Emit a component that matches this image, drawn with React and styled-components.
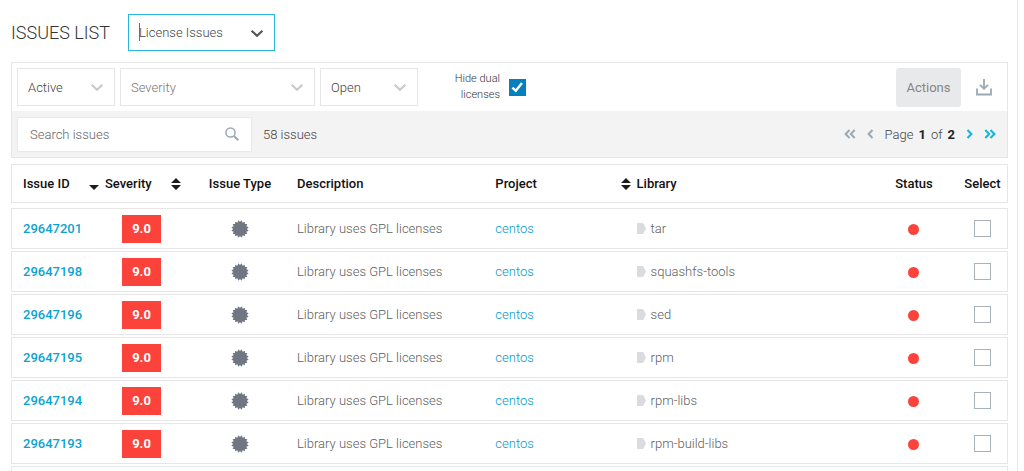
import React, { useState } from "react";
import styled, { createGlobalStyle } from "styled-components";

const line = "#e6e6e6";
const cyan = "#15acd6";

const GlobalStyle = createGlobalStyle`
  * { box-sizing: border-box; }
  body { margin: 0; background: #fff; }
  body, button, input, select {
    font-family: Roboto, "Liberation Sans", sans-serif;
    font-size: 13px;
    font-weight: 300;
    color: #444;
  }
`;

const Page = styled.main`
  height: 100vh;
  overflow: hidden;
  margin-right: 6px;
  padding: 14px 9px 0 11px;
  border-right: 1px solid ${line};
`;

const TitleBar = styled.header`
  display: flex;
  align-items: center;
  gap: 18px;
  margin-bottom: 11px;
`;

const Title = styled.h1`
  margin: 0;
  font-size: 18px;
  font-weight: 300;
  color: #333;
`;

const SelectWrap = styled.div`
  position: relative;
  width: ${(p) => p.$width}px;
  svg {
    position: absolute;
    top: 50%;
    right: 11px;
    margin-top: -4px;
    pointer-events: none;
  }
`;

const Select = styled.select`
  appearance: none;
  display: block;
  width: 100%;
  height: ${(p) => (p.$active ? 37 : 38)}px;
  padding: 0 10px;
  border: 1px solid ${(p) => (p.$active ? "#2bb8dc" : line)};
  border-radius: 0;
  background: #fff;
  color: ${(p) => (p.$muted ? "#777" : "#444")};
  outline: none;
`;

const TextCursor = styled.span`
  position: absolute;
  left: 11px;
  top: 9px;
  width: 1px;
  height: 18px;
  background: #8a6a48;
`;

const Panel = styled.section`
  border: 1px solid ${line};
  margin-bottom: 6px;
`;

const Toolbar = styled.div`
  display: flex;
  align-items: center;
  gap: 5px;
  height: 48px;
  padding: 0 15px 0 5px;
`;

const SearchBar = styled(Toolbar)`
  height: 46px;
  padding-right: 11px;
  background: #f3f3f3;
`;

const DualLabel = styled.label`
  display: flex;
  align-items: center;
  gap: 9px;
  margin-left: 27px;
  font-size: 11px;
  line-height: 16px;
  text-align: right;
  color: #333;
`;

const LabelText = styled.span`
  width: 50px;
`;

const CheckWrap = styled.span`
  position: relative;
  display: flex;
  svg {
    position: absolute;
    inset: 0;
    pointer-events: none;
  }
`;

const Checkbox = styled.input`
  appearance: none;
  width: 17px;
  height: 17px;
  margin: 0;
  border: 1px solid ${(p) => (p.checked ? "#0580bd" : "#a9b2ba")};
  background: ${(p) => (p.checked ? "#0580bd" : "#fff")};
`;

const ActionsButton = styled.button`
  height: 39px;
  width: 65px;
  margin-left: auto;
  padding: 0;
  border: 0;
  border-radius: 3px;
  background: #e8e9ea;
  color: #858585;
  font-weight: 400;
`;

const IconButton = styled.button`
  display: flex;
  padding: 0;
  border: 0;
  background: none;
  color: ${(p) => p.$color || "#9aa9b3"};
`;

const DownloadButton = styled(IconButton)`
  margin-left: 10px;
`;

const SearchField = styled.div`
  display: flex;
  align-items: center;
  width: 235px;
  height: 35px;
  padding: 0 12px;
  border: 1px solid #e9e9e9;
  background: #fff;
`;

const SearchInput = styled.input`
  flex: 1;
  min-width: 0;
  padding: 0;
  border: 0;
  outline: none;
  &::placeholder { color: #666; }
`;

const Count = styled.span`
  margin-left: 6px;
`;

const Pager = styled.nav`
  display: flex;
  align-items: center;
  gap: 11px;
  margin-left: auto;
`;

const PageText = styled.span`
  display: flex;
  gap: 5px;
  b { font-weight: 700; color: #222; }
`;

const Table = styled.table`
  display: block;
  thead { display: block; margin-bottom: 5px; }
  tbody { display: flex; flex-direction: column; gap: 2px; }
`;

const Row = styled.tr`
  display: grid;
  grid-template-columns:
    93px 78px 114px minmax(0, 198fr) minmax(0, 141fr)
    minmax(0, 233fr) 88px 49px;
  align-items: center;
  height: ${(p) => (p.$head ? 39 : 41)}px;
  border: 1px solid ${line};
`;

const HeadCell = styled.th`
  display: flex;
  align-items: center;
  justify-content: ${(p) => p.$justify || "flex-start"};
  padding: ${(p) => p.$pad || "0"};
  font-weight: 500;
  color: #111;
  white-space: nowrap;
`;

const Cell = styled.td`
  display: flex;
  align-items: center;
  justify-content: ${(p) => (p.$center ? "center" : "flex-start")};
  gap: 5px;
  padding: ${(p) => p.$pad || "0"};
  color: #606060;
  white-space: nowrap;
`;

const IssueLink = styled.a`
  font-weight: 500;
  color: #0aa3cf;
  text-decoration: none;
`;

const ProjectLink = styled.a`
  font-weight: 300;
  color: #0099c8;
  text-decoration: none;
`;

const Score = styled.span`
  display: flex;
  align-items: center;
  justify-content: center;
  width: 39px;
  height: 28px;
  background: #fb433b;
  color: #fff;
  font-weight: 700;
`;

const StatusDot = styled.span`
  width: 11px;
  height: 11px;
  border-radius: 50%;
  background: #fb433b;
`;

const Chevron = ({ color }) => (
  <svg width="14" height="9" viewBox="0 0 14 9" fill="none" stroke={color} strokeWidth="2.2">
    <path d="M1.6 1.8 7 6.8l5.4-5" />
  </svg>
);

const Dropdown = ({ label, width, active, muted }) => (
  <SelectWrap $width={width}>
    <Select aria-label={label} $active={active} $muted={muted}>
      <option>{label}</option>
    </Select>
    {active && <TextCursor />}
    <Chevron color={active ? "#555" : "#c9c9c9"} />
  </SelectWrap>
);

const SortDown = () => (
  <svg width="10" height="13" viewBox="0 0 10 13">
    <path d="M0 8h10L5 13z" fill="#1c1c1c" />
  </svg>
);

const SortBoth = () => (
  <svg width="10" height="12" viewBox="0 0 10 12" fill="#1c1c1c">
    <path d="M0 5 5 0l5 5zM0 7h10l-5 5z" />
  </svg>
);

const Arrows = ({ twice, flip }) => (
  <svg
    width={twice ? 12 : 7}
    height="10"
    viewBox={twice ? "0 0 12 10" : "0 0 7 10"}
    fill="none"
    stroke="currentColor"
    strokeWidth="2"
  >
    <g transform={flip ? `translate(${twice ? 12 : 7} 0) scale(-1 1)` : undefined}>
      <path d="M5.5 1 1.6 5l3.9 4" />
      {twice && <path d="M10.7 1 6.8 5l3.9 4" />}
    </g>
  </svg>
);

const burst = Array.from({ length: 32 }, (_, i) => {
  const r = i % 2 ? 6.9 : 8.8;
  const a = ((i + 1) * Math.PI) / 16;
  return `${(9 + r * Math.cos(a)).toFixed(2)},${(9 + r * Math.sin(a)).toFixed(2)}`;
}).join(" ");

const LicenseIcon = () => (
  <svg width="18" height="18" viewBox="0 0 18 18">
    <polygon points={burst} fill="#707682" />
  </svg>
);

const LibraryIcon = () => (
  <svg width="9" height="11" viewBox="0 0 9 11">
    <path d="M0 0h5.5q.6 0 .9.6L9 5.5 6.4 10.4q-.3.6-.9.6H0z" fill="#d9dbdf" />
  </svg>
);

const issues = [
  ["29647201", "tar"],
  ["29647198", "squashfs-tools"],
  ["29647196", "sed"],
  ["29647195", "rpm"],
  ["29647194", "rpm-libs"],
  ["29647193", "rpm-build-libs"],
];

const IssueRow = ({ id, library }) => {
  const [checked, setChecked] = useState(false);
  return (
    <Row>
      <Cell $pad="0 0 0 11px"><IssueLink href="#">{id}</IssueLink></Cell>
      <Cell $pad="0 0 0 17px"><Score>9.0</Score></Cell>
      <Cell $center><LicenseIcon /></Cell>
      <Cell>Library uses GPL licenses</Cell>
      <Cell><ProjectLink href="#">centos</ProjectLink></Cell>
      <Cell><LibraryIcon />{library}</Cell>
      <Cell $center $pad="2px 0 0"><StatusDot /></Cell>
      <Cell $center>
        <Checkbox
          type="checkbox"
          aria-label={`Select ${id}`}
          checked={checked}
          onChange={(e) => setChecked(e.target.checked)}
        />
      </Cell>
    </Row>
  );
};

export default function App() {
  const [hideDual, setHideDual] = useState(true);
  return (
    <Page>
      <GlobalStyle />
      <TitleBar>
        <Title>ISSUES LIST</Title>
        <Dropdown label="License Issues" width={147} active />
      </TitleBar>

      <Panel>
        <Toolbar>
          <Dropdown label="Active" width={98} />
          <Dropdown label="Severity" width={195} muted />
          <Dropdown label="Open" width={98} />
          <DualLabel>
            <LabelText>Hide dual licenses</LabelText>
            <CheckWrap>
              <Checkbox
                type="checkbox"
                checked={hideDual}
                onChange={(e) => setHideDual(e.target.checked)}
              />
              {hideDual && (
                <svg width="17" height="17" viewBox="0 0 17 17" fill="none" stroke="#fff" strokeWidth="2.4">
                  <path d="M3.4 8.6 6.8 11.8 13 4" />
                </svg>
              )}
            </CheckWrap>
          </DualLabel>
          <ActionsButton type="button">Actions</ActionsButton>
          <DownloadButton type="button" aria-label="Download">
            <svg width="16" height="17" viewBox="0 0 16 17" fill="none" stroke="currentColor" strokeWidth="1.8">
              <path d="M8 0v9.5M4 5.8l4 4 4-4M1 9.5v6h14v-6" />
            </svg>
          </DownloadButton>
        </Toolbar>
        <SearchBar>
          <SearchField>
            <SearchInput type="text" aria-label="Search issues" placeholder="Search issues" />
            <svg width="14" height="14" viewBox="0 0 14 14" fill="none" stroke="#9aa9b3">
              <circle cx="5.5" cy="5.5" r="4.6" strokeWidth="1.5" />
              <path d="m9 9 4.2 4.2" strokeWidth="2" />
            </svg>
          </SearchField>
          <Count>58 issues</Count>
          <Pager aria-label="Pages">
            <IconButton type="button" aria-label="First page"><Arrows twice /></IconButton>
            <IconButton type="button" aria-label="Previous page"><Arrows /></IconButton>
            <PageText><span>Page</span><b>1</b><span>of</span><b>2</b></PageText>
            <IconButton type="button" aria-label="Next page" $color="#12b3dc"><Arrows flip /></IconButton>
            <IconButton type="button" aria-label="Last page" $color="#12b3dc"><Arrows twice flip /></IconButton>
          </Pager>
        </SearchBar>
      </Panel>

      <Table>
        <thead>
          <Row $head>
            <HeadCell $justify="space-between" $pad="0 6px 0 11px">Issue ID<SortDown /></HeadCell>
            <HeadCell $justify="space-between" $pad="0 2px 0 0">Severity<SortBoth /></HeadCell>
            <HeadCell $justify="center">Issue Type</HeadCell>
            <HeadCell>Description</HeadCell>
            <HeadCell $justify="space-between" $pad="0 6px 0 0">Project<SortBoth /></HeadCell>
            <HeadCell>Library</HeadCell>
            <HeadCell $justify="center">Status</HeadCell>
            <HeadCell $justify="center">Select</HeadCell>
          </Row>
        </thead>
        <tbody>
          {issues.map(([id, library]) => (
            <IssueRow key={id} id={id} library={library} />
          ))}
          <Row />
        </tbody>
      </Table>
    </Page>
  );
}
